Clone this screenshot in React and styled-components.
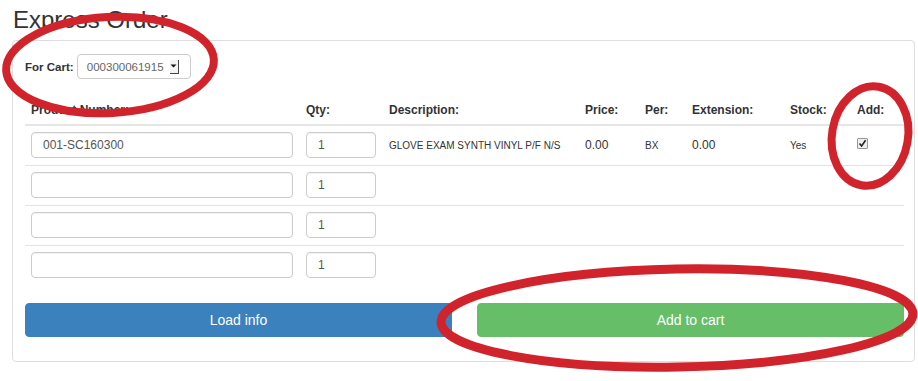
import React from 'react';
import styled, { createGlobalStyle } from 'styled-components';

const GlobalStyle = createGlobalStyle`
  body {
    margin: 0;
    background: #fff;
    font-family: 'Liberation Sans', Arial, sans-serif;
    color: #333;
  }
`;

const columns = [
  { key: 'product', label: 'Product Number:', width: 275 },
  { key: 'qty', label: 'Qty:', width: 83 },
  { key: 'desc', label: 'Description:', width: 196 },
  { key: 'price', label: 'Price:', width: 60 },
  { key: 'per', label: 'Per:', width: 47 },
  { key: 'ext', label: 'Extension:', width: 98 },
  { key: 'stock', label: 'Stock:', width: 67 },
  { key: 'add', label: 'Add:', width: 53 },
];

const rows = [
  {
    product: '001-SC160300',
    qty: '1',
    desc: 'GLOVE EXAM SYNTH VINYL P/F N/S',
    price: '0.00',
    per: 'BX',
    ext: '0.00',
    stock: 'Yes',
    add: true,
  },
  { product: '', qty: '1' },
  { product: '', qty: '1' },
  { product: '', qty: '1' },
];

const ExpressOrder = () => {
  return (
    <Page>
      <Title>Express Order</Title>
      <Panel>
        <CartRow>
          <CartLabel>For Cart:</CartLabel>
          <CartSelect>
            <span>000300061915</span>
            <SelectArrow>
              <svg width="7" height="4" viewBox="0 0 7 4">
                <path d="M0.5 0.5 H6.5 L3.5 3.5 Z" fill="#111" />
              </svg>
            </SelectArrow>
          </CartSelect>
        </CartRow>
        <OrderTable>
          <colgroup>
            {columns.map((c) => (
              <col key={c.key} style={{ width: c.width }} />
            ))}
          </colgroup>
          <thead>
            <tr>
              {columns.map((c) => (
                <Th key={c.key}>{c.label}</Th>
              ))}
            </tr>
          </thead>
          <tbody>
            {rows.map((row, i) => (
              <OrderRow key={i}>
                <Td>
                  <TextInput defaultValue={row.product} />
                </Td>
                <Td>
                  <QtyInput defaultValue={row.qty} />
                </Td>
                <Td>
                  <SmallText>{row.desc}</SmallText>
                </Td>
                <Td>{row.price}</Td>
                <Td>
                  <SmallText>{row.per}</SmallText>
                </Td>
                <Td>{row.ext}</Td>
                <Td>
                  <SmallText>{row.stock}</SmallText>
                </Td>
                <Td>{row.add ? <CheckBox /> : null}</Td>
              </OrderRow>
            ))}
          </tbody>
        </OrderTable>
        <ButtonRow>
          <ActionButton color="#3b81bd">Load info</ActionButton>
          <ActionButton color="#66be69">Add to cart</ActionButton>
        </ButtonRow>
      </Panel>
      <Marks viewBox="0 0 918 381" width="918" height="381">
        <ellipse
          cx="110"
          cy="65"
          rx="104"
          ry="48"
          transform="rotate(-3 110 65)"
          strokeWidth="8"
        />
        <ellipse
          cx="870"
          cy="136"
          rx="38"
          ry="50"
          transform="rotate(10 870 136)"
          strokeWidth="8"
        />
        <ellipse
          cx="677"
          cy="318"
          rx="236"
          ry="49"
          transform="rotate(-1 677 318)"
          strokeWidth="9"
        />
      </Marks>
    </Page>
  );
};

const CheckBox = () => (
  <CheckBoxBlock>
    <svg width="9" height="9" viewBox="0 0 9 9">
      <path d="M1.5 4.5 L3.6 7 L7.6 1.2" fill="none" stroke="#222" strokeWidth="1.6" />
    </svg>
  </CheckBoxBlock>
);

const Page = styled.div`
  position: relative;
  width: 918px;
  height: 381px;
  overflow: hidden;
  padding: 8px 3px 0 12px;
  box-sizing: border-box;
`;

const Title = styled.h1`
  margin: 0 0 8px 1px;
  font-size: 24px;
  line-height: 24px;
  font-weight: normal;
  color: #333;
`;

const Panel = styled.div`
  border: 1px solid #dedede;
  border-radius: 4px;
  padding: 13px 11px 24px 12px;
`;

const CartRow = styled.div`
  display: flex;
  align-items: center;
  gap: 3px;
`;

const CartLabel = styled.label`
  font-size: 11.5px;
  font-weight: bold;
`;

const CartSelect = styled.div`
  display: flex;
  align-items: center;
  justify-content: flex-end;
  gap: 6px;
  width: 114px;
  height: 25px;
  box-sizing: border-box;
  padding: 0 11px 0 8px;
  border: 1px solid #ccc;
  border-radius: 4px;
  font-size: 11.5px;
  color: #666;
`;

const SelectArrow = styled.span`
  display: flex;
  align-items: center;
  justify-content: center;
  width: 9px;
  height: 14px;
  box-sizing: border-box;
  border-right: 1px solid #444;
  border-bottom: 1px solid #444;
  background: #f2f2f2;
`;

const OrderTable = styled.table`
  width: 879px;
  margin-top: 16px;
  border-collapse: collapse;
  table-layout: fixed;
`;

const Th = styled.th`
  height: 29px;
  padding: 0 6px;
  text-align: left;
  font-size: 12px;
  font-weight: bold;
  color: #333;
  border-bottom: 2px solid #e6e6e6;
  white-space: nowrap;
  overflow: hidden;
`;

const OrderRow = styled.tr`
  & + & td {
    border-top: 1px solid #e3e3e3;
  }
`;

const Td = styled.td`
  height: 40px;
  padding: 0 6px;
  box-sizing: border-box;
  font-size: 12px;
  color: #333;
  vertical-align: middle;
  white-space: nowrap;
`;

const SmallText = styled.span`
  font-size: 10px;
  color: #333;
`;

const TextInput = styled.input`
  display: block;
  width: 262px;
  height: 26px;
  box-sizing: border-box;
  padding: 0 11px;
  border: 1px solid #ccc;
  border-radius: 4px;
  box-shadow: inset 0 1px 1px rgba(0, 0, 0, 0.06);
  font-family: 'Liberation Sans', Arial, sans-serif;
  font-size: 12px;
  color: #555;
`;

const QtyInput = styled(TextInput)`
  width: 70px;
`;

const CheckBoxBlock = styled.span`
  display: flex;
  align-items: center;
  justify-content: center;
  width: 11px;
  height: 11px;
  box-sizing: border-box;
  border: 1px solid #999;
  border-radius: 1px;
  background: #eee;
  margin-top: -3px;
`;

const ButtonRow = styled.div`
  display: grid;
  grid-template-columns: 1fr 1fr;
  gap: 25px;
  margin-top: 18px;
  width: 879px;
`;

const ActionButton = styled.button`
  height: 34px;
  border: 1px solid ${(p) => p.color};
  border-radius: 4px;
  background: ${(p) => p.color};
  color: #fff;
  font-family: 'Liberation Sans', Arial, sans-serif;
  font-size: 14px;
`;

const Marks = styled.svg`
  position: absolute;
  left: 0;
  top: 0;
  pointer-events: none;
  ellipse {
    fill: none;
    stroke: #d1232b;
  }
`;

const App = () => (
  <>
    <GlobalStyle />
    <ExpressOrder />
  </>
);

export default App;
